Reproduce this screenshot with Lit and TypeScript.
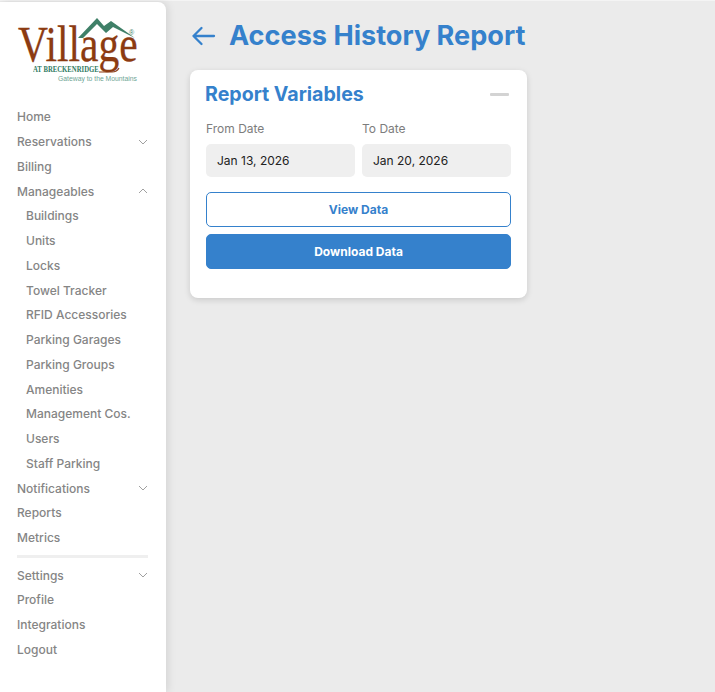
import { css, html, LitElement, nothing } from 'lit'
import { customElement } from 'lit/decorators.js'

type NavItem = { label: string; sub?: boolean; caret?: 'up' | 'down' }

const mainNav: NavItem[] = [
  { label: 'Home' },
  { label: 'Reservations', caret: 'down' },
  { label: 'Billing' },
  { label: 'Manageables', caret: 'up' },
  { label: 'Buildings', sub: true },
  { label: 'Units', sub: true },
  { label: 'Locks', sub: true },
  { label: 'Towel Tracker', sub: true },
  { label: 'RFID Accessories', sub: true },
  { label: 'Parking Garages', sub: true },
  { label: 'Parking Groups', sub: true },
  { label: 'Amenities', sub: true },
  { label: 'Management Cos.', sub: true },
  { label: 'Users', sub: true },
  { label: 'Staff Parking', sub: true },
  { label: 'Notifications', caret: 'down' },
  { label: 'Reports' },
  { label: 'Metrics' },
]

const footerNav: NavItem[] = [
  { label: 'Settings', caret: 'down' },
  { label: 'Profile' },
  { label: 'Integrations' },
  { label: 'Logout' },
]

@customElement('app-root')
export class AppRoot extends LitElement {
  static styles = css`
    :host {
      display: block;
      height: 692px;
      overflow: hidden;
      font-family: Inter, 'Noto Sans', sans-serif;
      background: #ebebeb;
    }

    .layout {
      display: flex;
      height: 100%;
      padding-top: 1px;
      border-top: 1px solid #f4f4f4;
      box-sizing: border-box;
    }

    .sidebar {
      width: 166px;
      flex: none;
      background: #fff;
      border-top-right-radius: 8px;
      box-shadow: 2px 0 8px rgba(0, 0, 0, 0.1);
      padding: 15px 18px 0 17px;
      box-sizing: border-box;
    }

    .logo {
      position: relative;
      height: 72px;
      margin-bottom: 15.6px;
    }

    .logo svg {
      position: absolute;
      left: 0;
      top: 0;
    }

    .logo-name {
      position: absolute;
      left: 1px;
      top: 0;
      font-family: 'Liberation Serif', serif;
      font-size: 50px;
      line-height: 54px;
      color: #8c3b12;
      -webkit-text-stroke: 0.3px #8c3b12;
      transform: scaleX(0.83);
      transform-origin: left;
    }

    .logo-reg {
      position: absolute;
      left: 112px;
      top: 12px;
      font-family: 'Liberation Sans', sans-serif;
      font-size: 7px;
      line-height: 8px;
      color: #3f8068;
    }

    .logo-place {
      position: absolute;
      left: 16px;
      top: 48px;
      font-family: 'Liberation Serif', serif;
      font-weight: 700;
      font-size: 7.4px;
      line-height: 9px;
      color: #2f7a62;
      white-space: nowrap;
      transform: scaleX(0.91);
      transform-origin: left;
    }

    .logo-tag {
      position: absolute;
      left: 41px;
      top: 57px;
      font-family: 'Liberation Sans', sans-serif;
      font-size: 6.8px;
      line-height: 9px;
      color: #6fa595;
      white-space: nowrap;
    }

    .nav-row {
      display: flex;
      align-items: center;
      justify-content: space-between;
      height: 24.75px;
      font-size: 12px;
      font-weight: 500;
      color: #858585;
      white-space: nowrap;
    }

    .nav-row.sub {
      padding-left: 9px;
    }

    .nav-row svg {
      display: block;
    }

    .divider {
      height: 3px;
      background: #efefef;
      margin: 5px 0 4.75px;
    }

    .content {
      flex: 1;
      padding: 16px 24px;
      min-width: 0;
    }

    .page-head {
      display: flex;
      align-items: center;
      gap: 13px;
      height: 36px;
      margin-bottom: 16px;
    }

    .back {
      display: block;
      flex: none;
    }

    h1 {
      margin: 0;
      font-size: 27.1px;
      font-weight: 700;
      line-height: 36px;
      color: #3581cc;
      white-space: nowrap;
    }

    .card {
      width: 337px;
      height: 228px;
      background: #fff;
      border-radius: 8px;
      box-shadow: 0 2px 6px rgba(0, 0, 0, 0.14);
      padding: 11px 18px 0 16px;
      box-sizing: border-box;
    }

    .card-head {
      display: flex;
      align-items: center;
      justify-content: space-between;
      height: 26px;
      margin-bottom: 13px;
    }

    h2 {
      margin: 0 0 0 -1px;
      font-size: 19.6px;
      font-weight: 700;
      line-height: 26px;
      color: #3581cc;
    }

    .collapse {
      width: 19px;
      height: 3px;
      border-radius: 1px;
      background: #d3d3d3;
    }

    .dates {
      display: grid;
      grid-template-columns: 149px 149px;
      gap: 7px;
      width: 305px;
      margin-bottom: 15px;
    }

    .field label {
      display: block;
      height: 17px;
      font-size: 12px;
      line-height: 17px;
      font-weight: 400;
      color: #7d7d7d;
      margin-bottom: 7px;
    }

    .date {
      height: 33px;
      line-height: 33px;
      border-radius: 5px;
      background: #efefef;
      padding-left: 11px;
      font-size: 12px;
      color: #222;
    }

    .btn {
      display: block;
      box-sizing: border-box;
      width: 305px;
      height: 35px;
      border-radius: 5px;
      border: 1px solid #3581cc;
      font-family: inherit;
      font-size: 12px;
      font-weight: 700;
      padding: 0;
    }

    .btn.outline {
      background: #fff;
      color: #3581cc;
      margin-bottom: 7px;
    }

    .btn.solid {
      background: #3581cc;
      color: #fff;
    }
  `

  private renderCaret(dir?: 'up' | 'down') {
    if (!dir) return nothing
    const d = dir === 'down' ? 'M1 1l4 4 4-4' : 'M1 5l4-4 4 4'
    return html`<svg width="10" height="6" viewBox="0 0 10 6" fill="none" stroke="#a0a0a0" stroke-width="1">
      <path d=${d}></path>
    </svg>`
  }

  private renderRow(item: NavItem) {
    return html`<div class="nav-row ${item.sub ? 'sub' : ''}">
      <span>${item.label}</span>${this.renderCaret(item.caret)}
    </div>`
  }

  render() {
    return html`
      <div class="layout">
        <aside class="sidebar">
          <div class="logo">
            <div class="logo-name">Village</div>
            <svg width="125" height="62" viewBox="0 0 125 62" fill="none">
              <path
                d="M61 21 L80 1 L87 9 L94 4 L118 21 L96 10 L89 16 L80 7 L66 21 Z"
                fill="#3f8068"
              ></path>
              <path d="M82 55 H95 Q100 55 102 51" stroke="#8c3b12" stroke-width="1.1"></path>
            </svg>
            <div class="logo-reg">®</div>
            <div class="logo-place">AT BRECKENRIDGE</div>
            <div class="logo-tag">Gateway to the Mountains</div>
          </div>
          <nav>
            ${mainNav.map((item) => this.renderRow(item))}
            <div class="divider"></div>
            ${footerNav.map((item) => this.renderRow(item))}
          </nav>
        </aside>
        <main class="content">
          <div class="page-head">
            <svg class="back" width="26" height="22" viewBox="0 0 26 22" fill="none" stroke="#3581cc" stroke-width="2.3" stroke-linecap="round" stroke-linejoin="round">
              <path d="M24 11H3.5M11.5 3L3.5 11l8 8"></path>
            </svg>
            <h1>Access History Report</h1>
          </div>
          <section class="card">
            <div class="card-head">
              <h2>Report Variables</h2>
              <div class="collapse"></div>
            </div>
            <div class="dates">
              <div class="field">
                <label>From Date</label>
                <div class="date">Jan 13, 2026</div>
              </div>
              <div class="field">
                <label>To Date</label>
                <div class="date">Jan 20, 2026</div>
              </div>
            </div>
            <button class="btn outline">View Data</button>
            <button class="btn solid">Download Data</button>
          </section>
        </main>
      </div>
    `
  }
}

declare global {
  interface HTMLElementTagNameMap {
    'app-root': AppRoot
  }
}
